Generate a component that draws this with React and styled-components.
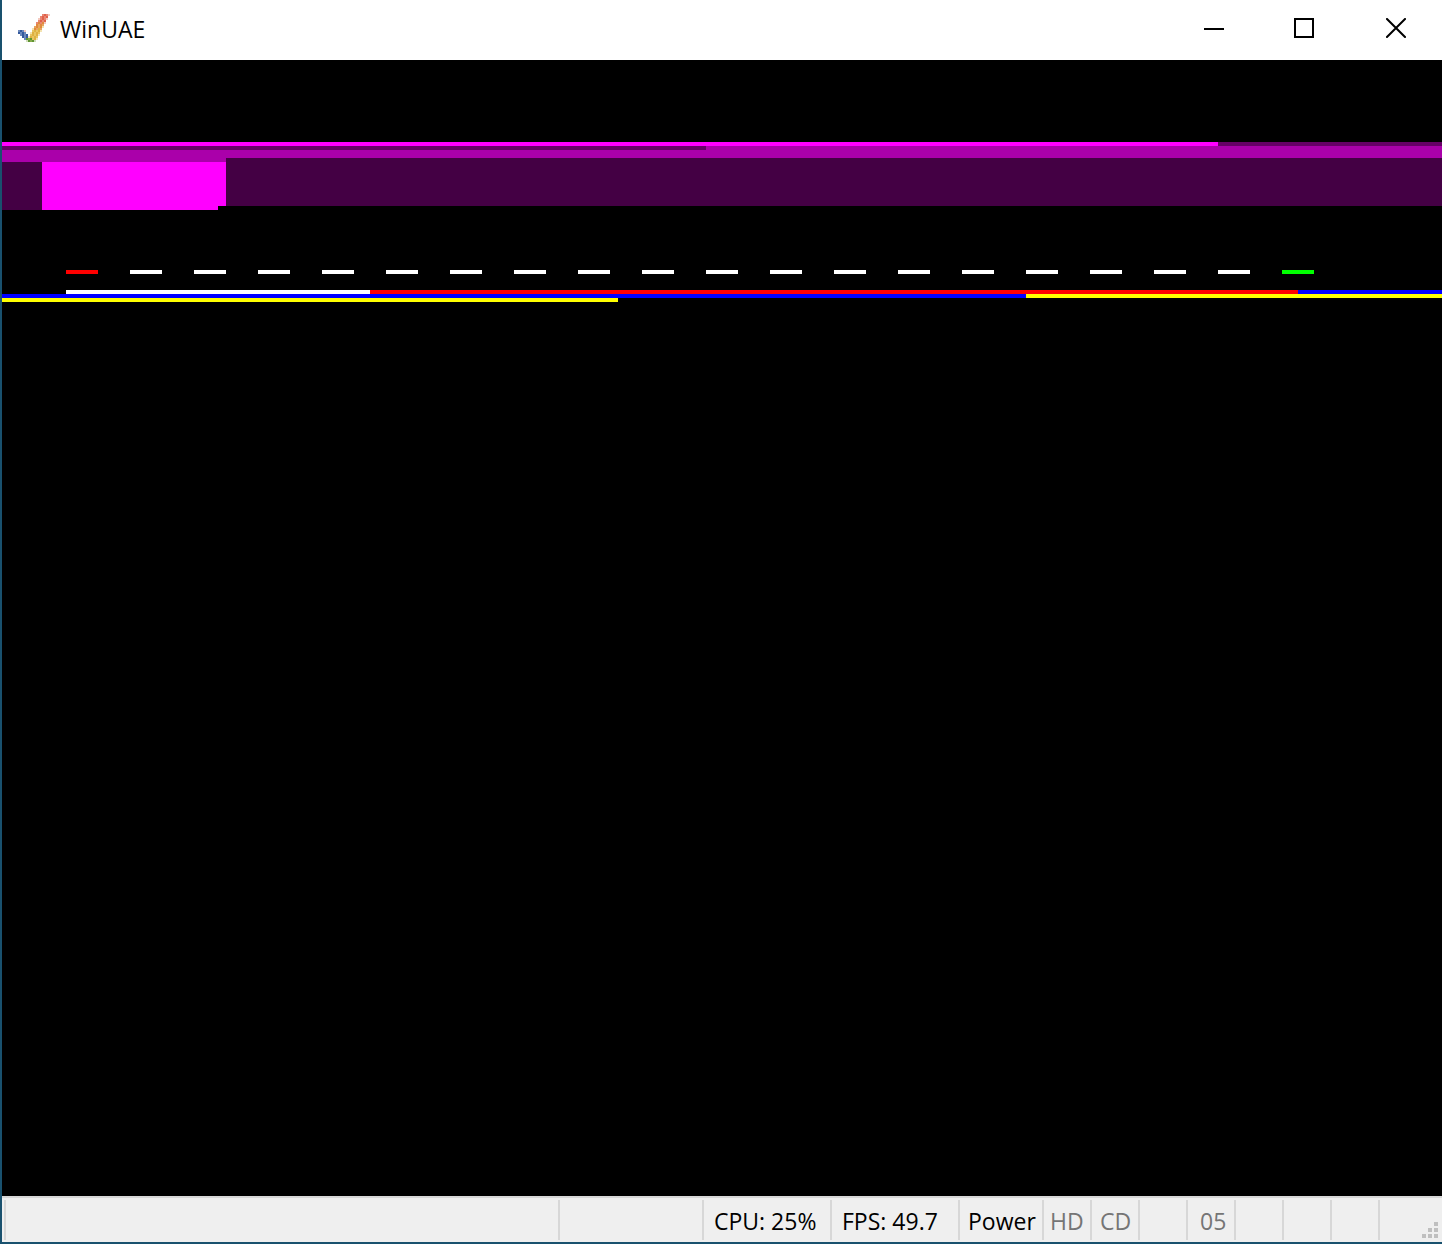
import React from "react";
import styled, { createGlobalStyle } from "styled-components";

const GlobalStyle = createGlobalStyle`
  * { box-sizing: border-box; }
  body { margin: 0; background: #efefef; }
`;

const Window = styled.div`
  display: flex;
  flex-direction: column;
  min-height: 100vh;
  border-left: 2px solid #19516e;
  border-bottom: 2px solid #19516e;
  background: #efefef;
  font-family: "Open Sans", "Noto Sans", sans-serif;
  font-size: 23px;
  line-height: 32px;
  color: #000;
`;

const TitleBar = styled.header`
  display: flex;
  height: 60px;
  padding-left: 16px;
  background: #fff;
`;

const Title = styled.h1`
  display: flex;
  flex: 1;
  align-items: center;
  gap: 10px;
  height: 56px;
  margin: 0;
  font-size: 23px;
  font-weight: 400;
`;

const TitleText = styled.span`
  padding-top: 2px;
`;

const ControlButton = styled.button`
  display: flex;
  align-items: center;
  justify-content: center;
  width: ${(p) => p.$width}px;
  height: 56px;
  padding: 0;
  border: 0;
  background: transparent;
  color: #000;
`;

const Screen = styled.main`
  flex: 1;
  background: #000;
`;

const Raster = styled.svg`
  display: block;
  width: 100%;
  height: auto;
`;

const StatusBar = styled.footer`
  display: flex;
  height: 46px;
  padding: 2px 0 2px 2px;
  border-top: 2px solid #d7d7d7;
`;

const StatusCell = styled.div`
  display: flex;
  flex: ${(p) => (p.$width ? `0 0 ${p.$width}px` : "1")};
  align-items: center;
  padding-top: 2px;
  padding-left: ${(p) => p.$pad || 0}px;
  border-left: 2px solid #d7d7d7;
  color: ${(p) => (p.$muted ? "#757575" : "#000")};
  white-space: nowrap;
`;

const GripCell = styled(StatusCell)`
  align-items: flex-end;
  justify-content: flex-end;
  padding-right: 4px;
  padding-bottom: 2px;
`;

const BANDS = [
  [0, 41, 608, 2, "#ff00ff"],
  [608, 41, 112, 2, "#660066"],
  [0, 43, 720, 8, "#aa00aa"],
  [0, 43, 352, 2, "#660066"],
  [0, 51, 20, 24, "#440044"],
  [112, 49, 608, 24, "#440044"],
  [20, 51, 92, 22, "#ff00ff"],
  [20, 73, 88, 2, "#ff00ff"],
  [32, 115, 152, 2, "#ffffff"],
  [184, 115, 464, 2, "#ff0000"],
  [648, 115, 72, 2, "#0000ff"],
  [0, 117, 512, 2, "#0000ff"],
  [512, 117, 208, 2, "#ffff00"],
  [0, 119, 308, 2, "#ffff00"],
];

const DASHES = Array.from({ length: 20 }, (_, i) => [
  32 + i * 32,
  105,
  16,
  2,
  i === 0 ? "#ff0000" : i === 19 ? "#00ff00" : "#ffffff",
]);

const CELLS = [
  {},
  { width: 144 },
  { width: 128, pad: 10, text: "CPU: 25%" },
  { width: 128, pad: 10, text: "FPS: 49.7" },
  { width: 84, pad: 8, text: "Power" },
  { width: 48, pad: 6, text: "HD", muted: true },
  { width: 48, pad: 8, text: "CD", muted: true },
  { width: 48 },
  { width: 48, pad: 12, text: "05", muted: true },
  { width: 48 },
  { width: 48 },
  { width: 48 },
];

const LOGO_COLORS = {
  p: "#f4c9bf",
  r: "#e0604a",
  R: "#e88672",
  o: "#e08a3c",
  O: "#e8a562",
  y: "#dfb040",
  Y: "#e8c660",
  q: "#f4e3b0",
  b: "#34599c",
  B: "#6c88bb",
  g: "#5f9430",
  G: "#86ab4c",
  l: "#cfdcb8",
};

const LOGO_ROWS = [
  "............RrRp",
  "...........RrRr.",
  "..........pRrRp.",
  "..........RrRr..",
  ".........RoRop..",
  ".........oOoO...",
  "........OoOoq...",
  ".......qoOyO....",
  "BbBp...YyYyq....",
  "bBbB..qyYyY.....",
  ".BbBb.YyYyq.....",
  "..bBbqyYyY......",
  "...BgGgYyq......",
  "....lgGgl.......",
];

function Logo() {
  return (
    <svg width="32" height="28" viewBox="0 0 16 14" shapeRendering="crispEdges" aria-hidden="true">
      {LOGO_ROWS.flatMap((row, y) =>
        [...row].map((c, x) =>
          c === "." ? null : (
            <rect key={`${x}-${y}`} x={x} y={y} width="1" height="1" fill={LOGO_COLORS[c]} />
          )
        )
      )}
    </svg>
  );
}

export default function App() {
  return (
    <Window>
      <GlobalStyle />
      <TitleBar>
        <Title>
          <Logo />
          <TitleText>WinUAE</TitleText>
        </Title>
        <ControlButton type="button" aria-label="Minimize" $width={88}>
          <svg width="20" height="20" viewBox="0 0 20 20">
            <path d="M0 11h20" stroke="currentColor" strokeWidth="2" />
          </svg>
        </ControlButton>
        <ControlButton type="button" aria-label="Maximize" $width={92}>
          <svg width="20" height="20" viewBox="0 0 20 20">
            <path d="M1 1h18v18H1z" fill="none" stroke="currentColor" strokeWidth="2" />
          </svg>
        </ControlButton>
        <ControlButton type="button" aria-label="Close" $width={92}>
          <svg width="20" height="20" viewBox="0 0 20 20">
            <path d="M1 1l18 18M19 1L1 19" stroke="currentColor" strokeWidth="2" strokeLinecap="square" />
          </svg>
        </ControlButton>
      </TitleBar>
      <Screen>
        <Raster viewBox="0 0 720 568" shapeRendering="crispEdges" aria-label="Emulated display">
          {[...BANDS, ...DASHES].map(([x, y, w, h, fill], i) => (
            <rect key={i} x={x} y={y} width={w} height={h} fill={fill} />
          ))}
        </Raster>
      </Screen>
      <StatusBar>
        {CELLS.map((c, i) => (
          <StatusCell key={i} $width={c.width} $pad={c.pad} $muted={c.muted}>
            {c.text}
          </StatusCell>
        ))}
        <GripCell $width={64}>
          <svg width="16" height="16" viewBox="0 0 16 16" fill="#bfbfbf" aria-hidden="true">
            <path d="M12 0h4v4h-4zM6 6h4v4H6zM12 6h4v4h-4zM0 12h4v4H0zM6 12h4v4H6zM12 12h4v4h-4z" />
          </svg>
        </GripCell>
      </StatusBar>
    </Window>
  );
}
